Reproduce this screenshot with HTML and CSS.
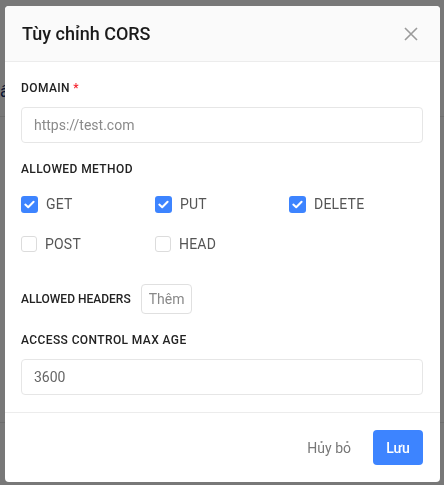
FILE: index.html
```html
<!DOCTYPE html>
<html lang="vi">
<head>
    <meta charset="UTF-8">
    <meta name="viewport" content="width=device-width, initial-scale=1.0">
    <title>Tùy chỉnh CORS</title>
    <link rel="stylesheet" href="styles.css">
</head>
<body>

<!-- Page behind the dialog -->
<div class="page">
    <div class="page-bar"></div>
    <p class="page-text">â</p>
    <div class="page-line"></div>
</div>

<div class="backdrop"></div>

<div class="modal">
    <header class="modal-header">
        <h1>Tùy chỉnh CORS</h1>
        <button class="close-btn" aria-label="Đóng">
            <svg width="14" height="14" viewBox="0 0 14 14">
                <path d="M1 1 L13 13 M13 1 L1 13" stroke="#9a9a9a" stroke-width="1.6" fill="none"/>
            </svg>
        </button>
    </header>

    <section class="modal-body">
        <label class="field-label" for="domain">DOMAIN <span class="required">*</span></label>
        <input id="domain" class="text-input" type="text" placeholder="https://test.com">

        <p class="field-label method-label">ALLOWED METHOD</p>
        <div class="method-grid">
            <label class="check"><span class="box checked"></span>GET</label>
            <label class="check"><span class="box checked"></span>PUT</label>
            <label class="check"><span class="box checked"></span>DELETE</label>
            <label class="check"><span class="box"></span>POST</label>
            <label class="check"><span class="box"></span>HEAD</label>
        </div>

        <div class="headers-row">
            <span class="small-label">ALLOWED HEADERS</span>
            <button class="add-btn">Thêm</button>
        </div>

        <label class="field-label" for="max-age">ACCESS CONTROL MAX AGE</label>
        <input id="max-age" class="text-input value" type="text" value="3600">
    </section>

    <footer class="modal-footer">
        <button class="cancel-btn">Hủy bỏ</button>
        <button class="save-btn">Lưu</button>
    </footer>
</div>

</body>
</html>
```

FILE: styles.css
```css
html, body {
    margin: 0;
    height: 100%;
    overflow: hidden;
}
body {
    font-family: Roboto, "Noto Sans", Arial, sans-serif;
    background-color: #ffffff;
    color: #222;
}
.page {
    height: 100%;
}
.page-bar {
    height: 116px;
    border-bottom: 1px solid #e8e8e8;
}
.page-text {
    position: absolute;
    top: 82px;
    left: 0;
    margin: 0;
    font-size: 16px;
    color: #0b2a6b;
}
.page-line {
    margin-top: 305px;
    border-bottom: 1px solid #e8e8e8;
}
.backdrop {
    position: fixed;
    inset: 0;
    background-color: rgba(0, 0, 0, 0.53);
}
.modal {
    position: fixed;
    top: 6px;
    left: 5px;
    width: 435px;
    background-color: #ffffff;
    border-radius: 4px;
    overflow: hidden;
}
.modal-header {
    display: flex;
    align-items: center;
    justify-content: space-between;
    height: 56px;
    padding: 0 22px 0 17px;
    background-color: #fafafa;
    border-bottom: 1px solid #ececec;
    box-sizing: border-box;
}
.modal-header h1 {
    margin: 0;
    font-size: 18px;
    font-weight: 500;
    color: #1a1a1a;
}
.close-btn {
    display: flex;
    border: none;
    background: none;
    padding: 0;
    cursor: pointer;
}
.modal-body {
    padding: 17px 17px 17px 16px;
}
.field-label {
    display: block;
    margin: 0 0 10px;
    font-size: 12px;
    line-height: 18px;
    font-weight: 500;
    letter-spacing: 0.4px;
    color: #222;
}
.required {
    color: #f5222d;
}
.text-input {
    display: block;
    width: 100%;
    height: 36px;
    padding: 0 12px;
    border: 1px solid #e6e6e6;
    border-radius: 4px;
    font-family: inherit;
    font-size: 14px;
    color: #666;
    box-sizing: border-box;
    outline: none;
}
.text-input::placeholder {
    color: #8a8a8a;
}
.method-label {
    margin-top: 17px;
    margin-bottom: 14px;
}
.method-grid {
    display: grid;
    grid-template-columns: repeat(3, 1fr);
    row-gap: 16px;
}
.check {
    display: flex;
    align-items: center;
    gap: 8px;
    height: 24px;
    font-size: 14px;
    color: #555;
    letter-spacing: 0.2px;
}
.box {
    width: 16px;
    height: 16px;
    border: 1px solid #dcdcdc;
    border-radius: 3px;
    box-sizing: border-box;
    background-color: #fff;
}
.box.checked {
    width: 17px;
    height: 17px;
    border: none;
    background-color: #3d84ff;
    background-image: url("data:image/svg+xml,%3Csvg xmlns='http://www.w3.org/2000/svg' viewBox='0 0 17 17'%3E%3Cpath d='M4.3 8.6 L7.2 11.3 L12.6 5.8' stroke='white' stroke-width='2' fill='none' stroke-linecap='round' stroke-linejoin='round'/%3E%3C/svg%3E");
}
.headers-row {
    display: flex;
    align-items: center;
    gap: 10px;
    margin-top: 28px;
    margin-bottom: 17px;
}
.small-label {
    font-size: 12px;
    font-weight: 500;
    color: #222;
}
.add-btn {
    height: 30px;
    padding: 0 7px;
    border: 1px solid #e0e0e0;
    border-radius: 4px;
    background: #fff;
    font-family: inherit;
    font-size: 14px;
    color: #888;
}
.modal-footer {
    display: flex;
    justify-content: flex-end;
    align-items: center;
    gap: 6px;
    padding: 17px 17px 17px 16px;
    border-top: 1px solid #ececec;
}
.cancel-btn {
    height: 35px;
    padding: 0 16px;
    border: none;
    background: none;
    font-family: inherit;
    font-size: 14px;
    color: #777;
}
.save-btn {
    height: 35px;
    width: 50px;
    border: none;
    border-radius: 4px;
    background-color: #3d84ff;
    font-family: inherit;
    font-size: 14px;
    font-weight: 500;
    color: #fff;
}
```
